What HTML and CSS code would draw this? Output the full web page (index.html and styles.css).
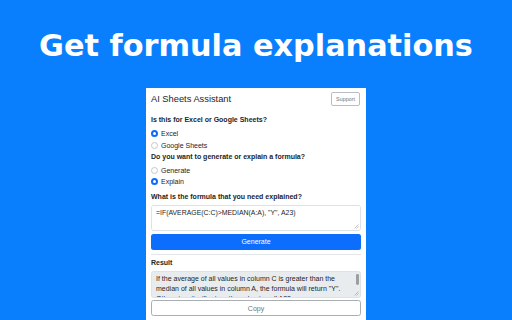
FILE: index.html
```html
<!DOCTYPE html>
<html>
<head>
<meta charset="utf-8">
<link rel="stylesheet" href="styles.css">
</head>
<body>
<h1 class="hero">Get formula explanations</h1>
<div class="panel">
  <div class="head">
    <div class="title">AI Sheets Assistant</div>
    <div class="support">Support</div>
  </div>
  <div class="label first">Is this for Excel or Google Sheets?</div>
  <div class="radios">
    <div class="radio-row"><span class="radio checked"></span><span>Excel</span></div>
    <div class="radio-row"><span class="radio"></span><span>Google Sheets</span></div>
  </div>
  <div class="label second">Do you want to generate or explain a formula?</div>
  <div class="radios">
    <div class="radio-row"><span class="radio"></span><span>Generate</span></div>
    <div class="radio-row"><span class="radio checked"></span><span>Explain</span></div>
  </div>
  <div class="label third">What is the formula that you need explained?</div>
  <div class="input-box">
    <div class="input-text">=IF(AVERAGE(C:C)&gt;MEDIAN(A:A), "Y", A23)</div>
    <svg class="grip" width="5" height="5" viewBox="0 0 5 5"><path d="M0.5 4.5 L4.5 0.5 M2.5 4.5 L4.5 2.5" stroke="#9a9a9a" stroke-width="0.6" fill="none"/></svg>
  </div>
  <div class="btn-primary">Generate</div>
  <div class="divider"></div>
  <div class="label result-label">Result</div>
  <div class="result-box">
    <div class="result-text">If the average of all values in column C is greater than the median of all values in column A, the formula will return "Y". Otherwise, it will return the value in cell A23.</div>
    <div class="scroll-thumb"></div>
    <svg class="grip" width="5" height="5" viewBox="0 0 5 5"><path d="M0.5 4.5 L4.5 0.5 M2.5 4.5 L4.5 2.5" stroke="#9a9a9a" stroke-width="0.6" fill="none"/></svg>
  </div>
  <div class="btn-outline">Copy</div>
</div>
</body>
</html>
```
FILE: styles.css
```css
html, body {
  margin: 0;
  padding: 0;
}
body {
  width: 512px;
  height: 320px;
  overflow: hidden;
  background: #0a7ffe;
}
.hero {
  margin: 0;
  padding-top: 26px;
  height: 40px;
  line-height: 40px;
  font-family: "DejaVu Sans", sans-serif;
  font-weight: bold;
  font-size: 30.3px;
  color: #ffffff;
  text-align: center;
}
.panel {
  width: 210px;
  margin: 22px auto 0;
  padding: 4px 5px 10px;
  background: #ffffff;
  font-family: "Liberation Sans", Arial, sans-serif;
  color: #212529;
}
.head {
  display: flex;
  justify-content: space-between;
  align-items: center;
  height: 14px;
}
.title {
  font-size: 9.3px;
  line-height: 13px;
}
.support {
  box-sizing: border-box;
  width: 29px;
  height: 14px;
  margin-right: 1px;
  border: 1px solid #b9bec3;
  border-radius: 2px;
  font-size: 5.4px;
  white-space: nowrap;
  color: #6c757d;
  display: flex;
  align-items: center;
  justify-content: center;
}
.label {
  font-weight: bold;
  font-size: 7px;
  line-height: 10px;
}
.label.first { margin-top: 9px; }
.label.second { margin-top: 0.8px; }
.label.third { margin-top: 4px; }
.radios {
  margin-top: 2.5px;
}
.radio-row {
  display: flex;
  align-items: center;
  gap: 3px;
  height: 11.7px;
  font-size: 7px;
}
.radio {
  box-sizing: border-box;
  width: 7px;
  height: 7px;
  border-radius: 50%;
  border: 0.7px solid #c4c8cc;
  background: #ffffff;
}
.radio.checked {
  border: 2.2px solid #0d6efd;
  background: #ffffff;
}
.input-box {
  position: relative;
  box-sizing: border-box;
  margin-top: 3.4px;
  height: 26px;
  border: 1px solid #dee2e6;
  border-radius: 2.5px;
  padding: 2.5px 4px;
}
.input-text {
  font-size: 6.9px;
  line-height: 9.7px;
}
.grip {
  position: absolute;
  right: 1px;
  bottom: 1px;
}
.btn-primary {
  margin-top: 3px;
  height: 16px;
  border-radius: 2.5px;
  background: #0d6efd;
  color: #ffffff;
  font-size: 7px;
  display: flex;
  align-items: center;
  justify-content: center;
}
.divider {
  margin-top: 4px;
  height: 1px;
  background: #e3e6e9;
}
.label.result-label { margin-top: 2.6px; }
.result-box {
  position: relative;
  box-sizing: border-box;
  margin-top: 3.4px;
  height: 27px;
  overflow: hidden;
  border: 1px solid #dee2e6;
  border-radius: 2.5px;
  background: #e9ecef;
  padding: 2.5px 8px 0 4px;
}
.result-text {
  font-size: 7px;
  line-height: 9.7px;
}
.scroll-thumb {
  position: absolute;
  right: 1.5px;
  top: 2.5px;
  width: 2.8px;
  height: 11px;
  border-radius: 1.4px;
  background: #9c9ea0;
}
.btn-outline {
  box-sizing: border-box;
  margin-top: 2.3px;
  height: 16px;
  border: 1px solid #a9aeb3;
  border-radius: 2.5px;
  color: #6c757d;
  font-size: 7px;
  display: flex;
  align-items: center;
  justify-content: center;
}
```
